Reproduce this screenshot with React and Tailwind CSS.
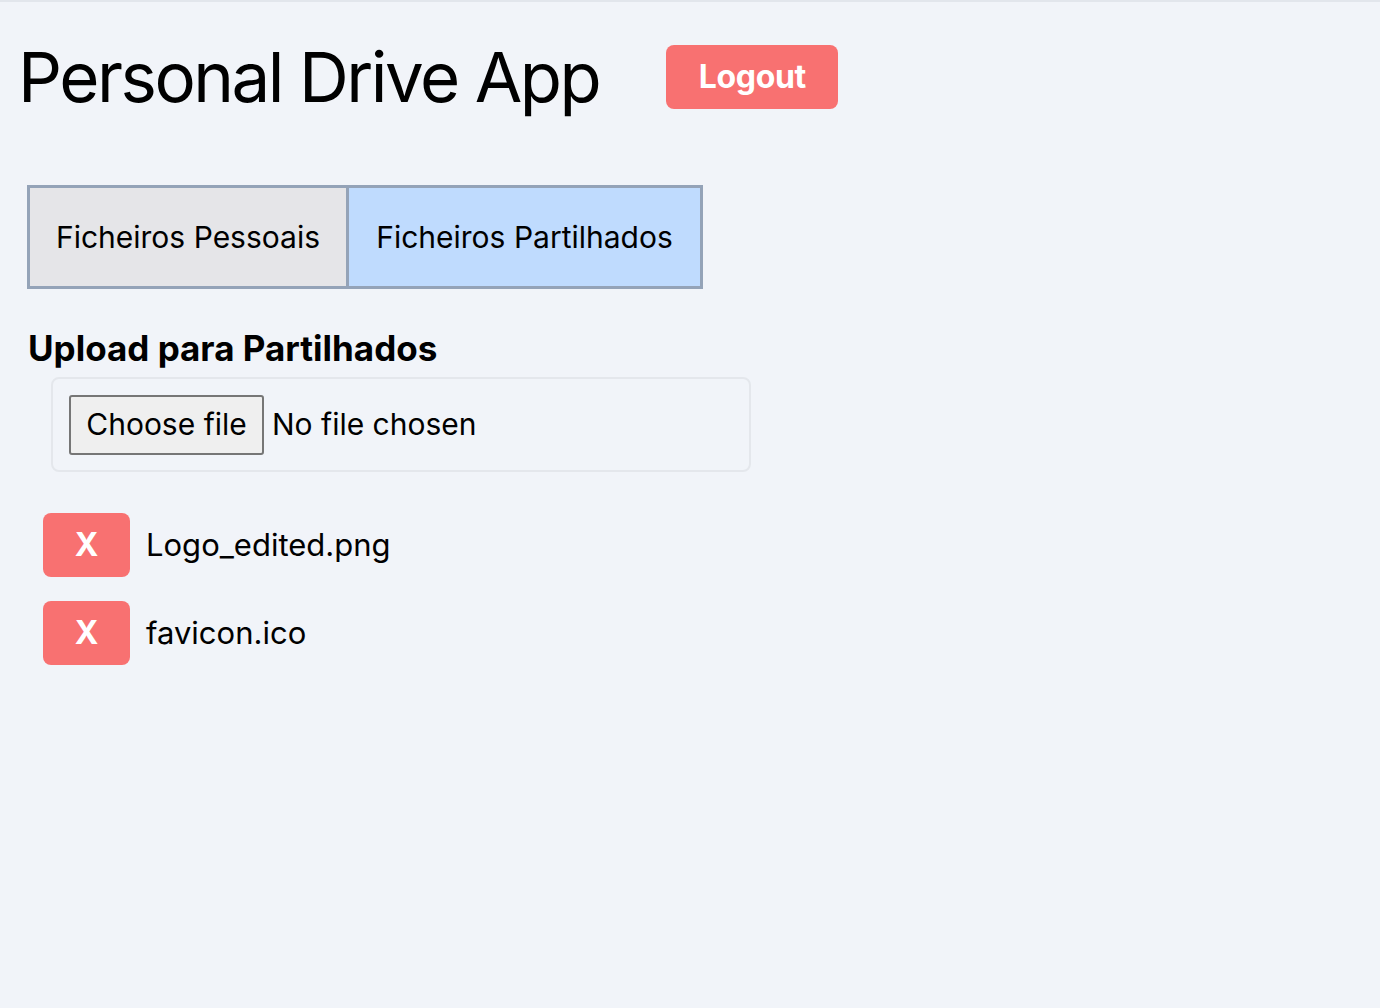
export default function App() {
  const files = ['Logo_edited.png', 'favicon.ico'];
  return (
    <div className="min-h-screen bg-[#f1f4f9] border-t-2 border-[#e2e6ec] font-['Inter',sans-serif] text-black">
      <div className="flex items-center gap-[67px] pl-[18px] pt-[39px]">
        <h1 className="text-[69px] leading-[72px] tracking-[-0.036em]">Personal Drive App</h1>
        <button className="h-16 w-[172px] rounded-lg bg-[#f87171] text-[32px] font-bold tracking-[-0.01em] text-white">Logout</button>
      </div>

      <div className="mt-[72px] ml-[27px] flex w-fit border-[3px] border-[#94a3b8]">
        <button className="h-[98px] w-[316px] bg-[#e5e5e8] text-[30px]">Ficheiros Pessoais</button>
        <button className="h-[98px] w-[354px] border-l-[3px] border-[#94a3b8] bg-[#bfdbfe] text-[30px]">Ficheiros Partilhados</button>
      </div>

      <h2 className="ml-7 mt-[42px] text-[35px] font-bold leading-none">Upload para Partilhados</h2>

      <div className="ml-[51px] mt-[11px] flex h-[95px] w-[700px] items-center rounded-lg border-2 border-[#e4e7ec] px-4">
        <span className="flex h-[60px] w-[195px] items-center justify-center rounded-[3px] border-2 border-[#767676] bg-[#efefef] text-[30px]">Choose file</span>
        <span className="ml-2 text-[30px]">No file chosen</span>
      </div>

      <ul className="ml-[43px] mt-[41px] flex flex-col gap-6">
        {files.map((f) => (
          <li key={f} className="flex items-center gap-4">
            <button className="h-16 w-[87px] rounded-lg bg-[#f87171] text-[32px] font-bold text-white">X</button>
            <span className="text-[31px]">{f}</span>
          </li>
        ))}
      </ul>
    </div>
  );
}
